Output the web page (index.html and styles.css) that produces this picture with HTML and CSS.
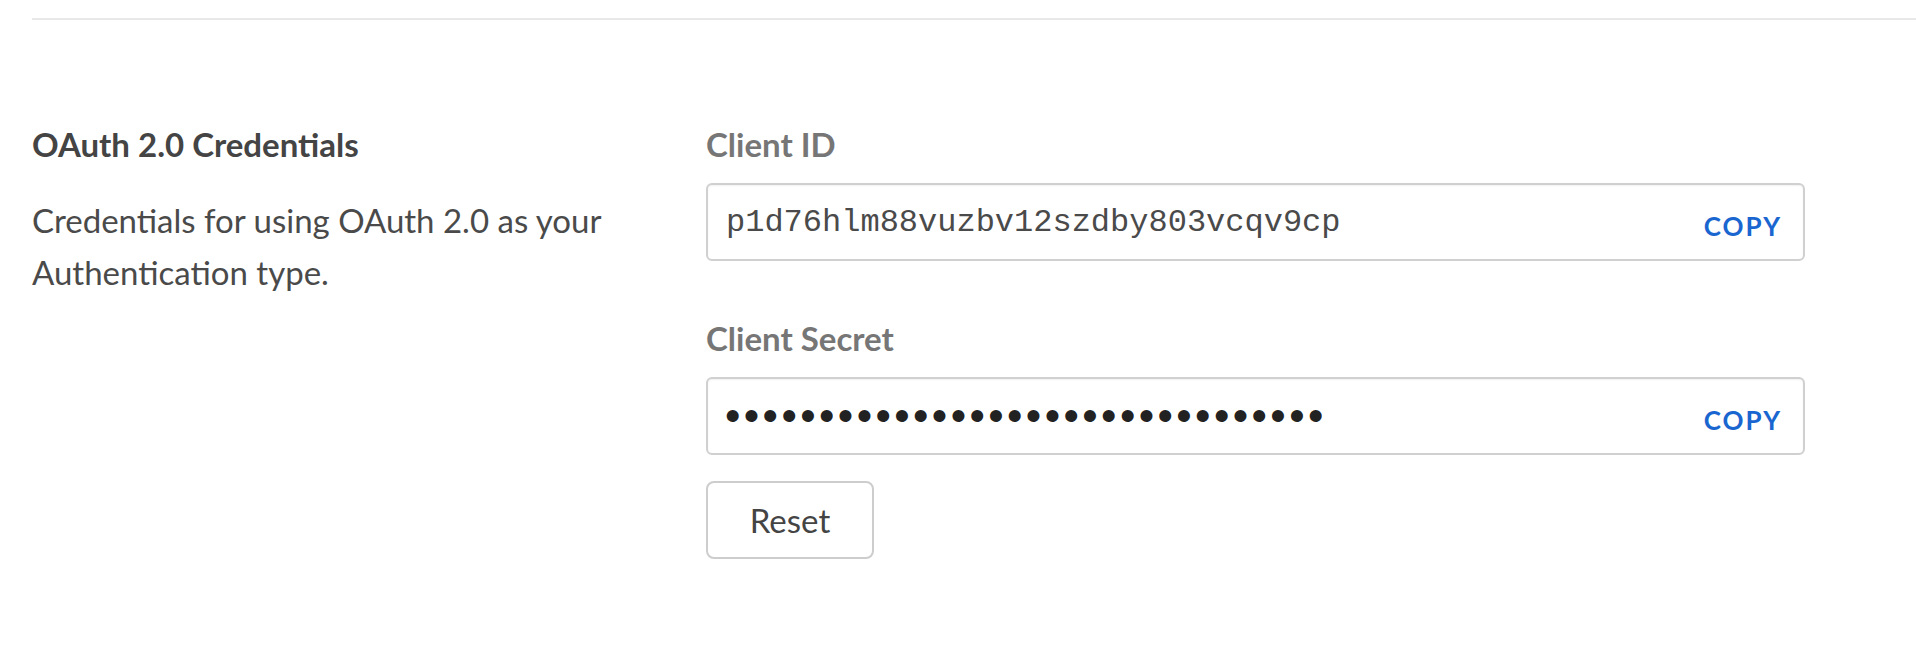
FILE: index.html
```html
<!DOCTYPE html>
<html lang="en">
<head>
<meta charset="utf-8">
<title>OAuth 2.0 Credentials</title>
<link rel="stylesheet" href="styles.css">
</head>
<body>
  <div class="divider"></div>
  <section class="creds">
    <div class="creds-info">
      <h2 class="creds-title">OAuth 2.0 Credentials</h2>
      <p class="creds-desc">Credentials for using OAuth 2.0 as your Authentication type.</p>
    </div>
    <div class="creds-fields">
      <div class="field">
        <label class="field-label">Client ID</label>
        <div class="field-box">
          <span class="field-value">p1d76hlm88vuzbv12szdby803vcqv9cp</span>
          <button class="copy-btn" type="button">COPY</button>
        </div>
      </div>
      <div class="field">
        <label class="field-label">Client Secret</label>
        <div class="field-box">
          <span class="field-value secret">••••••••••••••••••••••••••••••••</span>
          <button class="copy-btn" type="button">COPY</button>
        </div>
      </div>
      <button class="reset-btn" type="button">Reset</button>
    </div>
  </section>
</body>
</html>
```

FILE: styles.css
```css
html, body {
  margin: 0;
  padding: 0;
  background: #ffffff;
}

body {
  font-family: Lato, "Open Sans", sans-serif;
  color: #444444;
}

.divider {
  margin: 18px 0 0 32px;
  height: 0;
  border-top: 2px solid #e8e8e8;
}

.creds {
  display: grid;
  grid-template-columns: 674px 1099px;
  padding: 104px 0 0 32px;
}

.creds-title {
  margin: 0;
  font-size: 33px;
  line-height: 40px;
  font-weight: 700;
  color: #444444;
}

.creds-desc {
  margin: 30px 0 0 0;
  width: 610px;
  font-size: 33px;
  line-height: 52px;
  font-weight: 400;
  color: #4a4a4a;
}

.creds-fields {
  display: flex;
  flex-direction: column;
  align-items: flex-start;
}

.field {
  display: flex;
  flex-direction: column;
  width: 1099px;
  margin-bottom: 57px;
}

.field:nth-child(2) {
  margin-bottom: 26px;
}

.field-label {
  font-size: 33px;
  line-height: 40px;
  font-weight: 700;
  color: #767676;
}

.field-box {
  margin-top: 19px;
  box-sizing: border-box;
  height: 78px;
  display: flex;
  align-items: center;
  justify-content: space-between;
  padding: 0 21px 0 18px;
  border: 2px solid #d0d0d0;
  border-radius: 6px;
  box-shadow: inset 0 1px 2px rgba(0, 0, 0, 0.06);
}

.field-value {
  font-family: "Liberation Mono", "Courier New", monospace;
  font-size: 32px;
  color: #4a4a4a;
}

.field-value.secret {
  font-family: "Liberation Sans", Arial, sans-serif;
  font-size: 44px;
  line-height: 44px;
  letter-spacing: 3.4px;
  color: #222222;
  padding-left: 0;
  margin-left: -1px;
}

.copy-btn {
  margin-top: 8px;
  padding: 0;
  border: 0;
  background: none;
  font-family: Lato, sans-serif;
  font-size: 26px;
  font-weight: 700;
  letter-spacing: 2px;
  color: #1a66d0;
  cursor: pointer;
}

.reset-btn {
  box-sizing: border-box;
  width: 168px;
  height: 78px;
  padding: 0;
  border: 2px solid #cdcdcd;
  border-radius: 8px;
  background: #ffffff;
  font-family: Lato, sans-serif;
  font-size: 33px;
  font-weight: 400;
  color: #444444;
  cursor: pointer;
}
```
